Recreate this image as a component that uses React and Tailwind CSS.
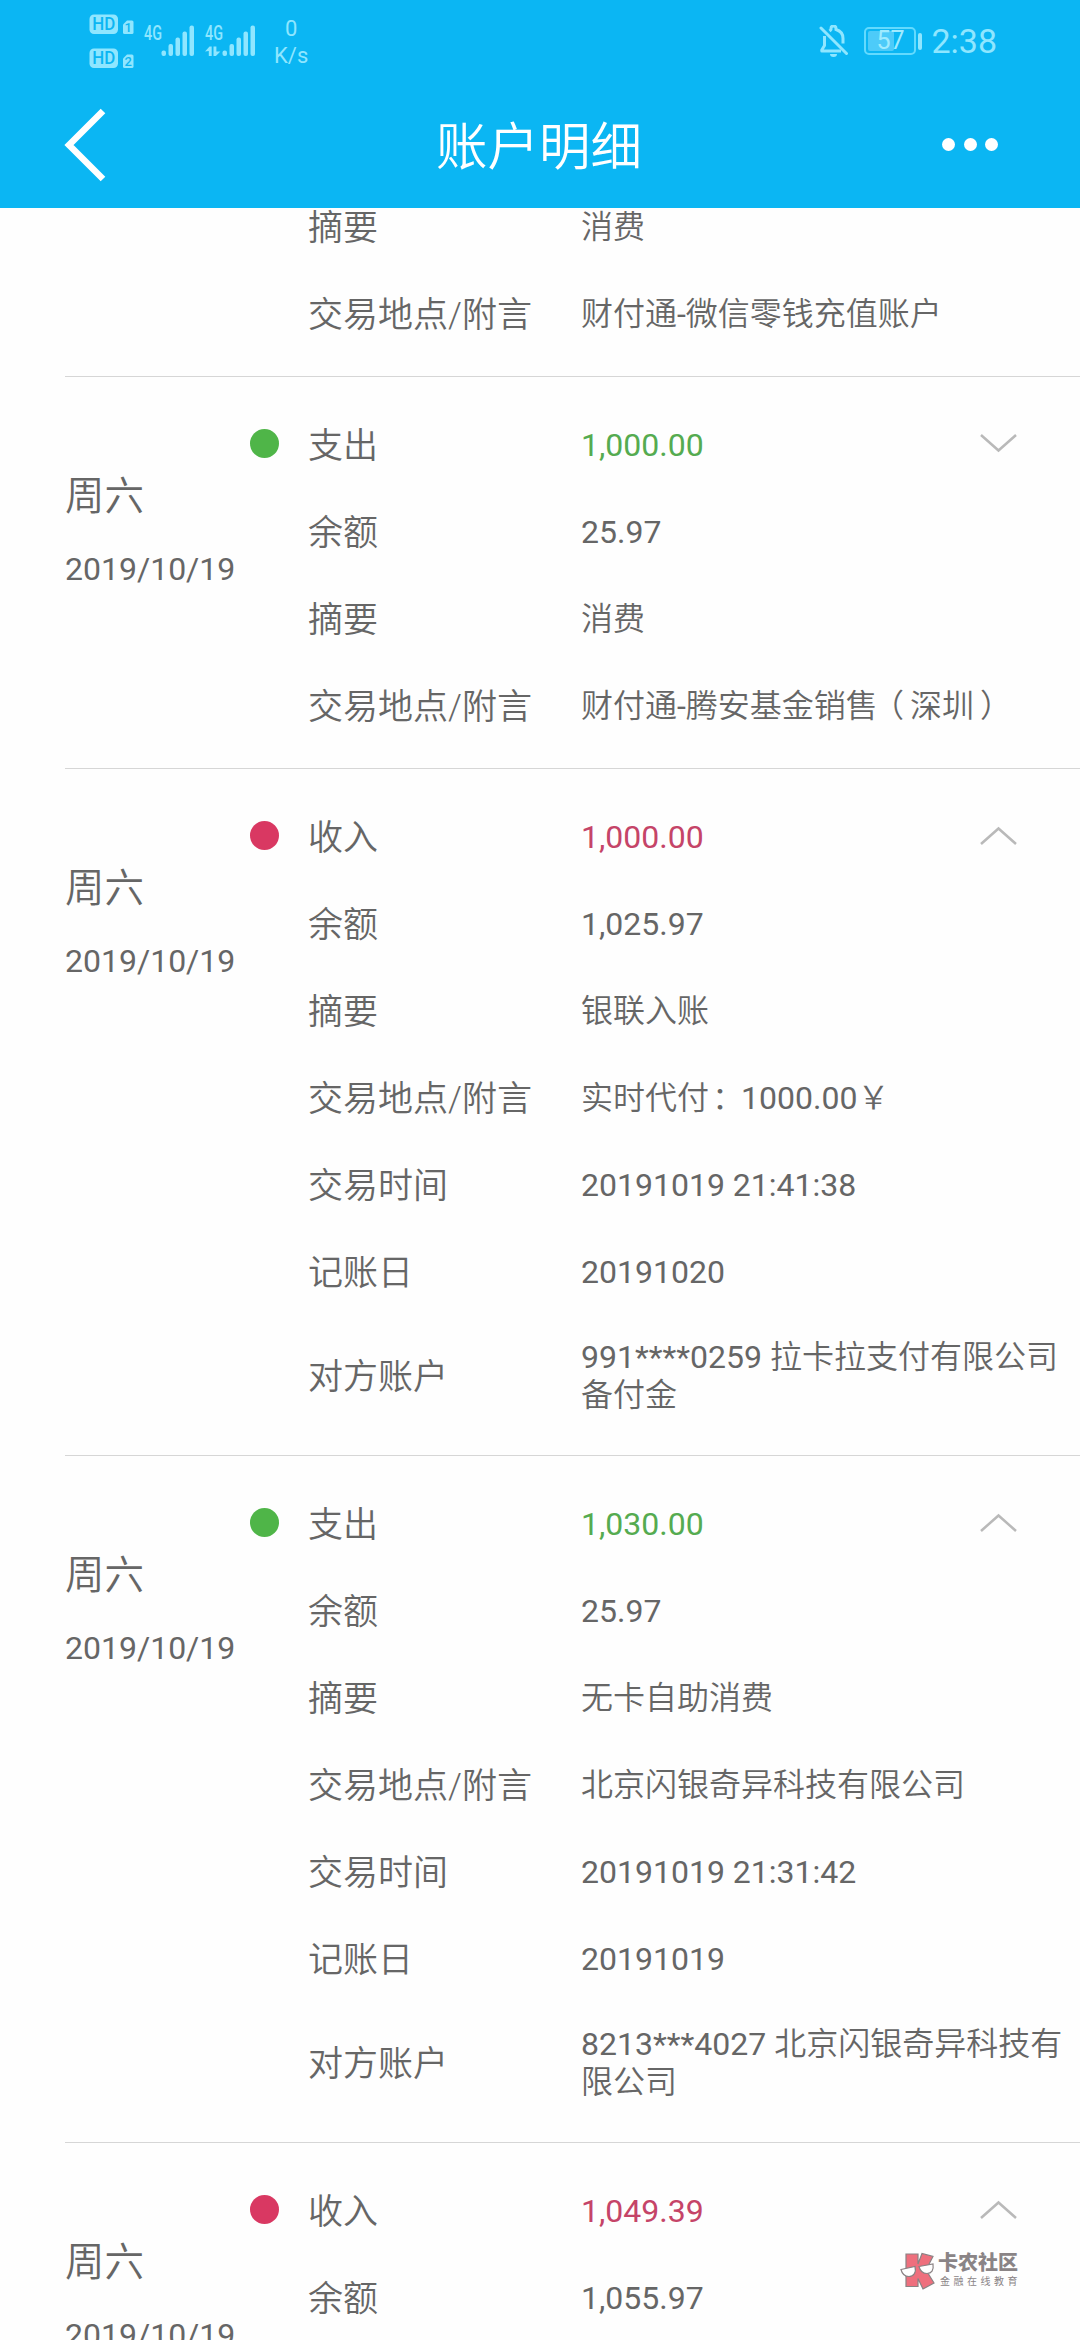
const ICON = "#8fe6ff";

const groups = [
  {
    clipped: true,
    rows: [
      ["摘要", "消费"],
      ["交易地点/附言", "财付通-微信零钱充值账户"],
    ],
  },
  {
    type: "支出",
    amount: "1,000.00",
    open: false,
    rows: [
      ["余额", "25.97"],
      ["摘要", "消费"],
      ["交易地点/附言", "财付通-腾安基金销售（深圳）"],
    ],
  },
  {
    type: "收入",
    amount: "1,000.00",
    open: true,
    rows: [
      ["余额", "1,025.97"],
      ["摘要", "银联入账"],
      ["交易地点/附言", "实时代付：1000.00￥"],
      ["交易时间", "20191019 21:41:38"],
      ["记账日", "20191020"],
      ["对方账户", "991****0259 拉卡拉支付有限公司备付金"],
    ],
  },
  {
    type: "支出",
    amount: "1,030.00",
    open: true,
    rows: [
      ["余额", "25.97"],
      ["摘要", "无卡自助消费"],
      ["交易地点/附言", "北京闪银奇异科技有限公司"],
      ["交易时间", "20191019 21:31:42"],
      ["记账日", "20191019"],
      ["对方账户", "8213***4027 北京闪银奇异科技有限公司"],
    ],
  },
  {
    type: "收入",
    amount: "1,049.39",
    open: true,
    rows: [["余额", "1,055.97"]],
  },
];

// Latin runs are set in regular weight; full-width punctuation is centred in its cell.
function Mixed({ text }) {
  return text.split(/([\x20-\x7e]+|[（）：])/).filter(Boolean).map((part, i) => {
    if (part === "（") return <span key={i} className="-ml-[6px] mr-[6px]">{part}</span>;
    if (part === "）") return <span key={i} className="-mr-[6px] ml-[6px]">{part}</span>;
    if (part === "：") return <span key={i} className="-mr-[3px] ml-[3px]">{part}</span>;
    if (/^[\x20-\x7e]+$/.test(part)) return <span key={i} className="font-normal">{part}</span>;
    return <span key={i}>{part}</span>;
  });
}

function HdBadge({ sim }) {
  return (
    <svg width="46" height="21" viewBox="0 0 46 21" className="block">
      <rect x="0.5" y="0.5" width="28.5" height="19.5" rx="4.5" fill={ICON} />
      <text x="14.7" y="16.4" textAnchor="middle" fontSize="17.5" fontWeight="500" fill="#0bb6f3" textLength="23" lengthAdjust="spacingAndGlyphs">HD</text>
      <path d="M34 10.5l4-4h5a1.500 1.500 0 0 1 1.500 1.500v10.500a1.500 1.500 0 0 1-1.500 1.500h-7.500a1.500 1.500 0 0 1-1.500-1.500z" fill={ICON} />
      <text x="39.300" y="18" textAnchor="middle" fontSize="13" fontWeight="500" fill="#0bb6f3">{sim}</text>
    </svg>
  );
}

function Signal({ data }) {
  return (
    <svg width="52" height="34" viewBox="0 0 52 34" className="block overflow-visible">
      <text x="0" y="15.500" fontSize="19.500" fontWeight="500" fill={ICON} textLength="18" lengthAdjust="spacingAndGlyphs">4G</text>
      {data && (
        <path d="M0 27.500l4.500-5h2.200v9.500h-2.900v-5zM8.500 22.500h2.900v5h4l-4.500 4.500h-2.400z" fill={ICON} />
      )}
      <g fill={ICON}>
        <rect x="17.500" y="26.500" width="4.500" height="5.500" rx="2" />
        <rect x="24.500" y="20" width="4.500" height="12" rx="2" />
        <rect x="31.500" y="13.500" width="4.500" height="18.500" rx="2" />
        <rect x="38.500" y="7.500" width="4.500" height="24.500" rx="2" />
        <rect x="45.500" y="1.500" width="4.500" height="30.500" rx="2" />
      </g>
    </svg>
  );
}

function MutedBell() {
  return (
    <svg width="30" height="32" viewBox="0 0 30 32" fill="none" stroke={ICON} strokeWidth="3" className="block">
      <path d="M2 3l25.500 25.500" strokeLinecap="round" />
      <path d="M5.500 11v9.500L2.800 25v1H22" strokeLinejoin="round" />
      <path d="M10.500 6c1-.8 1.500-1 1.500-1.500V3.500a2.500 2.500 0 0 1 5 0v1c5 1.500 7 5 7 9v5" />
      <path d="M11 29a3.500 3 0 0 0 7 0z" fill={ICON} stroke="none" />
    </svg>
  );
}

function Battery() {
  return (
    <div className="flex items-center">
      <div className="flex h-[28px] w-[52px] rounded-[5px] border-2 border-[#63dafe] p-[2px]">
        <div className="relative h-full w-[26px] rounded-[2px] bg-[#4dcbf9]">
          <span className="absolute left-[8px] top-[-2px] text-[25px] leading-[24px] text-[#a0ebff]">57</span>
        </div>
      </div>
      <div className="ml-[2px] h-[17px] w-[4px] rounded-[2px] bg-[#8fe6ff]" />
    </div>
  );
}

function Header() {
  return (
    <header className="h-[208px] bg-[#0bb6f3]">
      <div className="flex h-[82px] items-center pl-[89px] pr-[83px] text-[#8fe6ff]">
        <div className="flex flex-col gap-[13px]">
          <HdBadge sim="1" />
          <HdBadge sim="2" />
        </div>
        <div className="ml-[9px] flex gap-[9px]">
          <Signal />
          <Signal data />
        </div>
        <div className="ml-[17px] flex flex-col items-center pt-[2px] text-[22px] leading-[27px]">
          <span>0</span>
          <span>K/s</span>
        </div>
        <div className="ml-auto flex items-center">
          <MutedBell />
          <div className="ml-[15px]"><Battery /></div>
          <span className="ml-[9px] text-[34px] leading-[40px]">2:38</span>
        </div>
      </div>
      <div className="flex h-[126px] items-center pl-[64px] pr-[82px]">
        <svg width="44" height="74" viewBox="0 0 44 74" fill="none" className="block">
          <path d="M39 3L5 37l34 34" stroke="#fff" strokeWidth="6.500" />
        </svg>
        <h1 className="ml-[328px] mt-[6px] text-[51.500px] font-[350] leading-[60px] text-white">账户明细</h1>
        <div className="-mt-[2px] ml-auto flex gap-[8.500px]">
          <i className="block size-[13px] rounded-full bg-white" />
          <i className="block size-[13px] rounded-full bg-white" />
          <i className="block size-[13px] rounded-full bg-white" />
        </div>
      </div>
    </header>
  );
}

function Chevron({ open }) {
  return (
    <svg width="37" height="19" viewBox="0 0 37 19" fill="none" stroke="#b9b9b9" strokeWidth="2.500" className="-mt-[4px] block">
      <path d={open ? "M1 18L18.500 2.500 36 18" : "M1 1l17.500 15.500L36 1"} />
    </svg>
  );
}

function Row({ label, value }) {
  const tall = label === "对方账户";
  return (
    <div className={tall ? "flex h-[121px] items-center" : "flex h-[87px] items-center"}>
      <div className="w-[273px] shrink-0 pt-[2px] text-[35px] leading-[40px]">{label}</div>
      <div className="min-w-0 flex-1 break-all pb-px text-[32px] leading-[38px]"><Mixed text={value} /></div>
    </div>
  );
}

function Group({ item }) {
  const income = item.type === "收入";
  if (item.clipped) {
    return (
      <section className="-mt-[24px] pb-[18px] pl-[243px]">
        {item.rows.map(([l, v]) => <Row key={l} label={l} value={v} />)}
      </section>
    );
  }
  return (
    <section className="flex border-t border-[#d6d6d6] pb-[18px] pt-[25px]">
      <div className="w-[185px] shrink-0 pt-[70px]">
        <div className="text-[39.500px] leading-[50px]">周六</div>
        <div className="mt-[27px] text-[32px] font-normal leading-[40px]">2019/10/19</div>
      </div>
      <div className="w-[58px] shrink-0 pt-[27px]">
        <div className={income ? "size-[29px] rounded-full bg-[#d93862]" : "size-[29px] rounded-full bg-[#4fb548]"} />
      </div>
      <div className="min-w-0 flex-1">
        <div className="flex h-[87px] items-center pr-[63px]">
          <div className="w-[273px] shrink-0 pt-[2px] text-[35px] leading-[40px]">{item.type}</div>
          <div className={income ? "flex-1 pb-[2px] text-[32px] font-normal leading-[38px] text-[#c54468]" : "flex-1 pb-[2px] text-[32px] font-normal leading-[38px] text-[#55ab50]"}>{item.amount}</div>
          <Chevron open={item.open} />
        </div>
        {item.rows.map(([l, v]) => <Row key={l} label={l} value={v} />)}
      </div>
    </section>
  );
}

function Watermark() {
  return (
    <div className="absolute left-[900px] top-[2251px] flex">
      <svg width="36" height="40" viewBox="0 0 36 40" className="block">
        <path d="M6 3h12v10l4-10.500 11 3-7 13.500 8 13-11 6-5-10.500v8H6z" fill="#ee6f7d" stroke="#8a8284" strokeWidth="1.200" />
        <g fill="#fff" stroke="#8a8284" strokeWidth="1.200">
          <path d="M1 18.500l14-3c1.500 6.500-1.500 10-6 10s-7-3-8-7z" />
          <path d="M19 15.500l14-2.500c1 6.500-1.500 9.500-6 9.500s-7-3-8-7z" />
        </g>
      </svg>
      <div className="ml-[2px] flex flex-col text-[#8a8486]">
        <span className="whitespace-nowrap text-[20px] font-black leading-[24px]">卡农社区</span>
        <span className="whitespace-nowrap pl-[2px] text-[10px] leading-[14px] tracking-[3.500px]">金融在线教育</span>
      </div>
    </div>
  );
}

export default function App() {
  return (
    <div className="relative h-[2340px] w-[1080px] overflow-hidden bg-[#fefefe] font-[Roboto,'Noto_Sans_CJK_SC',sans-serif] text-[#666666]">
      <Header />
      <main className="h-[2132px] overflow-hidden pl-[65px] font-[350]">
        {groups.map((g, i) => <Group key={i} item={g} />)}
      </main>
      <Watermark />
    </div>
  );
}
